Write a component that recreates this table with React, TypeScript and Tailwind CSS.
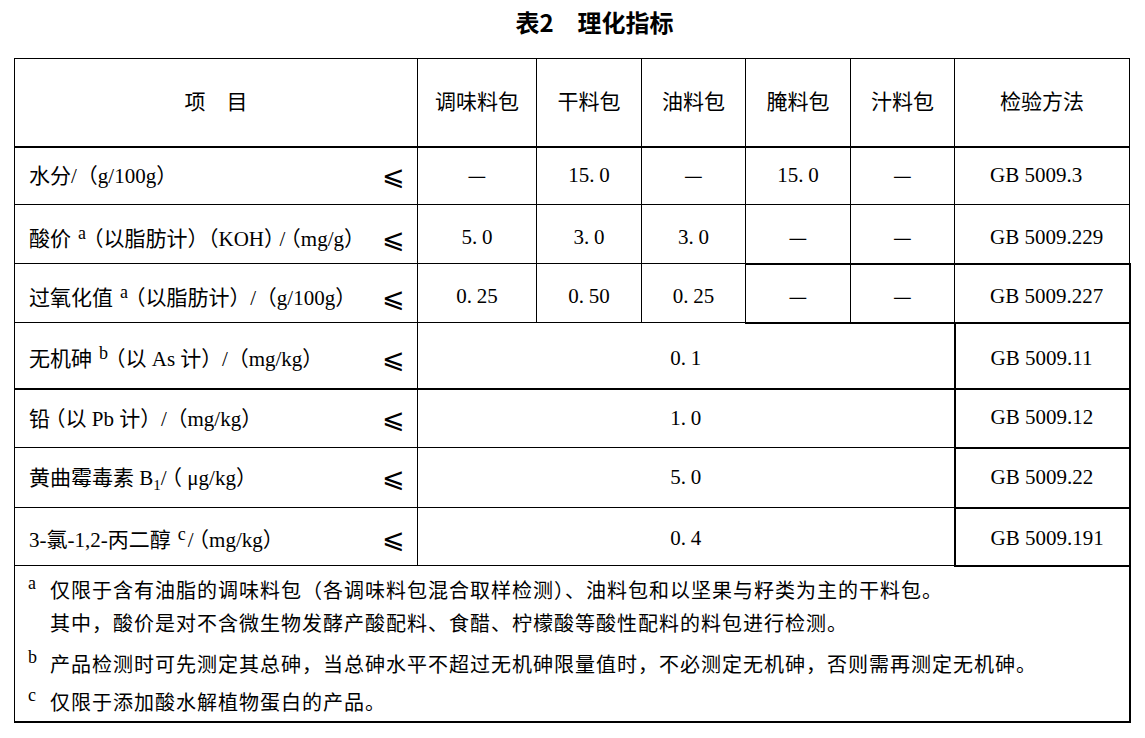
import React from "react";

const serif = "font-['Liberation_Serif','Noto_Sans_CJK_SC',serif]";

// half-width CJK parens with a little air, so they sit like the reference
const L = () => <span className="pl-[5px] font-['Noto_Sans_CJK_SC',sans-serif] [font-feature-settings:'halt']">（</span>;
const R = () => <span className="pr-[5px] font-['Noto_Sans_CJK_SC',sans-serif] [font-feature-settings:'halt']">）</span>;

function Sup({ children }: { children: React.ReactNode }) {
  return <span className="ml-[7px] mr-[2px] text-[18px] leading-none align-[7px]">{children}</span>;
}

function Num({ v }: { v: string }) {
  if (v === "—") return <span className="font-['Noto_Sans_CJK_SC',sans-serif]">—</span>;
  const [a, b] = v.split(".");
  return (
    <span>
      {a}
      <span className="inline-block w-[10px] text-left">.</span>
      {b}
    </span>
  );
}

function Label({ children }: { children: React.ReactNode }) {
  return (
    <div className="flex items-center justify-between pl-[14px] pr-[12px]">
      <span className="leading-[26px] whitespace-nowrap">{children}</span>
      <span className="font-['DejaVu_Sans',sans-serif] font-extralight text-[27px] leading-none">⩽</span>
    </div>
  );
}

const cell = "border border-black p-0 text-center";
const method = "border border-black p-0 pl-[35px] text-left";

type Row = {
  label: React.ReactNode;
  vals: string[];
  gb: string;
  h: string;
  pt: string;
};

const top: Row[] = [
  {
    label: <>水分/（g/100g）</>,
    vals: ["—", "15.0", "—", "15.0", "—"],
    gb: "GB 5009.3",
    h: "h-[58px]",
    pt: "",
  },
  {
    label: (
      <>
        酸价<Sup>a</Sup>
        <L />以脂肪计<R /><L />KOH<R />/<L />mg/g<R />
      </>
    ),
    vals: ["5.0", "3.0", "3.0", "—", "—"],
    gb: "GB 5009.229",
    h: "h-[59px]",
    pt: "pt-[8px]",
  },
  {
    label: (
      <>
        过氧化值<Sup>a</Sup>
        <L />以脂肪计<R /> / <L />g/100g<R />
      </>
    ),
    vals: ["0.25", "0.50", "0.25", "—", "—"],
    gb: "GB 5009.227",
    h: "h-[59px]",
    pt: "pt-[8px]",
  },
];

const merged = [
  {
    label: (
      <>
        无机砷<Sup>b</Sup>
        <L />以 As 计<R /> / <L />mg/kg<R />
      </>
    ),
    val: "0.1",
    gb: "GB 5009.11",
    h: "h-[66px]",
    pt: "pt-[6px]",
    td: "border-b-2",
    gbx: "border-b-2",
  },
  {
    label: (
      <>
        铅<L />以 Pb 计<R /> / <L />mg/kg<R />
      </>
    ),
    val: "1.0",
    gb: "GB 5009.12",
    h: "h-[59px]",
    pt: "",
    td: "",
    gbx: "",
  },
  {
    label: (
      <>
        黄曲霉毒素 B<span className="text-[15px] leading-none align-[-5px]">1</span>/<L /> μg/kg<R />
      </>
    ),
    val: "5.0",
    gb: "GB 5009.22",
    h: "h-[60px]",
    pt: "",
    td: "",
    gbx: "border-t-2",
  },
  {
    label: (
      <>
        3-氯-1,2-丙二醇<Sup>c</Sup>/<L />mg/kg<R />
      </>
    ),
    val: "0.4",
    gb: "GB 5009.191",
    h: "h-[58px]",
    pt: "pt-[4px]",
    td: "",
    gbx: "border-t-2 border-b-2",
  },
];

function NoteMark({ children }: { children: React.ReactNode }) {
  return (
    <span className="inline-block w-[22px] text-[18px] leading-none tracking-normal align-[9px]">{children}</span>
  );
}

export default function App() {
  return (
    <div className={`min-h-screen bg-white text-black ${serif} text-[21px]`}>
      <div className="flex justify-center pl-[44px] pt-[7px]">
        <div className="h-[30px] leading-[30px] text-[24px] font-bold font-['Noto_Sans_CJK_SC',sans-serif]">
          表2　理化指标
        </div>
      </div>

      <table className="table-fixed border-collapse w-[1115px] ml-[14px] mt-[21px]">
        <colgroup>
          <col className="w-[403px]" />
          <col className="w-[119px]" />
          <col className="w-[105px]" />
          <col className="w-[104px]" />
          <col className="w-[105px]" />
          <col className="w-[104px]" />
          <col className="w-[175px]" />
        </colgroup>
        <tbody>
          <tr className="h-[88px]">
            <td className={`${cell} border-b-2`}>项　目</td>
            <td className={`${cell} border-b-2`}>调味料包</td>
            <td className={`${cell} border-b-2`}>干料包</td>
            <td className={`${cell} border-b-2`}>油料包</td>
            <td className={`${cell} border-b-2`}>腌料包</td>
            <td className={`${cell} border-b-2`}>汁料包</td>
            <td className={`${cell} border-b-2`}>检验方法</td>
          </tr>

          {top.map((r, i) => (
            <tr key={i} className={r.h}>
              <td className={`border border-black p-0 ${r.pt}`}>
                <Label>{r.label}</Label>
              </td>
              {r.vals.map((v, j) => (
                <td
                  key={j}
                  className={`${cell} ${r.pt} ${i === 2 && j >= 3 ? "border-t-2 border-b-2" : ""}`}
                >
                  <Num v={v} />
                </td>
              ))}
              <td className={`${method} ${r.pt} ${i === 2 ? "border-t-2 border-b-2 border-r-2" : ""}`}>
                {r.gb}
              </td>
            </tr>
          ))}

          {merged.map((r, i) => (
            <tr key={i} className={r.h}>
              <td className={`border border-black p-0 ${r.pt} ${r.td}`}>
                <Label>{r.label}</Label>
              </td>
              <td colSpan={5} className={`${cell} ${r.pt} ${r.td}`}>
                <Num v={r.val} />
              </td>
              <td className={`${method} ${r.pt} ${r.td} ${r.gbx} border-l-2 border-r-2`}>{r.gb}</td>
            </tr>
          ))}

          <tr>
            <td
              colSpan={7}
              className="border border-black border-r-2 border-b-2 h-[156px] align-top p-0 pl-[13px] pt-[7px] text-[20px] tracking-[1px]"
            >
              <div className="leading-[33px]">
                <NoteMark>a</NoteMark>仅限于含有油脂的调味料包（各调味料包混合取样检测）、油料包和以坚果与籽类为主的干料包。
              </div>
              <div className="leading-[33px] pl-[22px]">
                其中，酸价是对不含微生物发酵产酸配料、食醋、柠檬酸等酸性配料的料包进行检测。
              </div>
              <div className="leading-[33px] mt-[7px]">
                <NoteMark>b</NoteMark>产品检测时可先测定其总砷，当总砷水平不超过无机砷限量值时，不必测定无机砷，否则需再测定无机砷。
              </div>
              <div className="leading-[33px] mt-[4px]">
                <NoteMark>c</NoteMark>仅限于添加酸水解植物蛋白的产品。
              </div>
            </td>
          </tr>
        </tbody>
      </table>
    </div>
  );
}
